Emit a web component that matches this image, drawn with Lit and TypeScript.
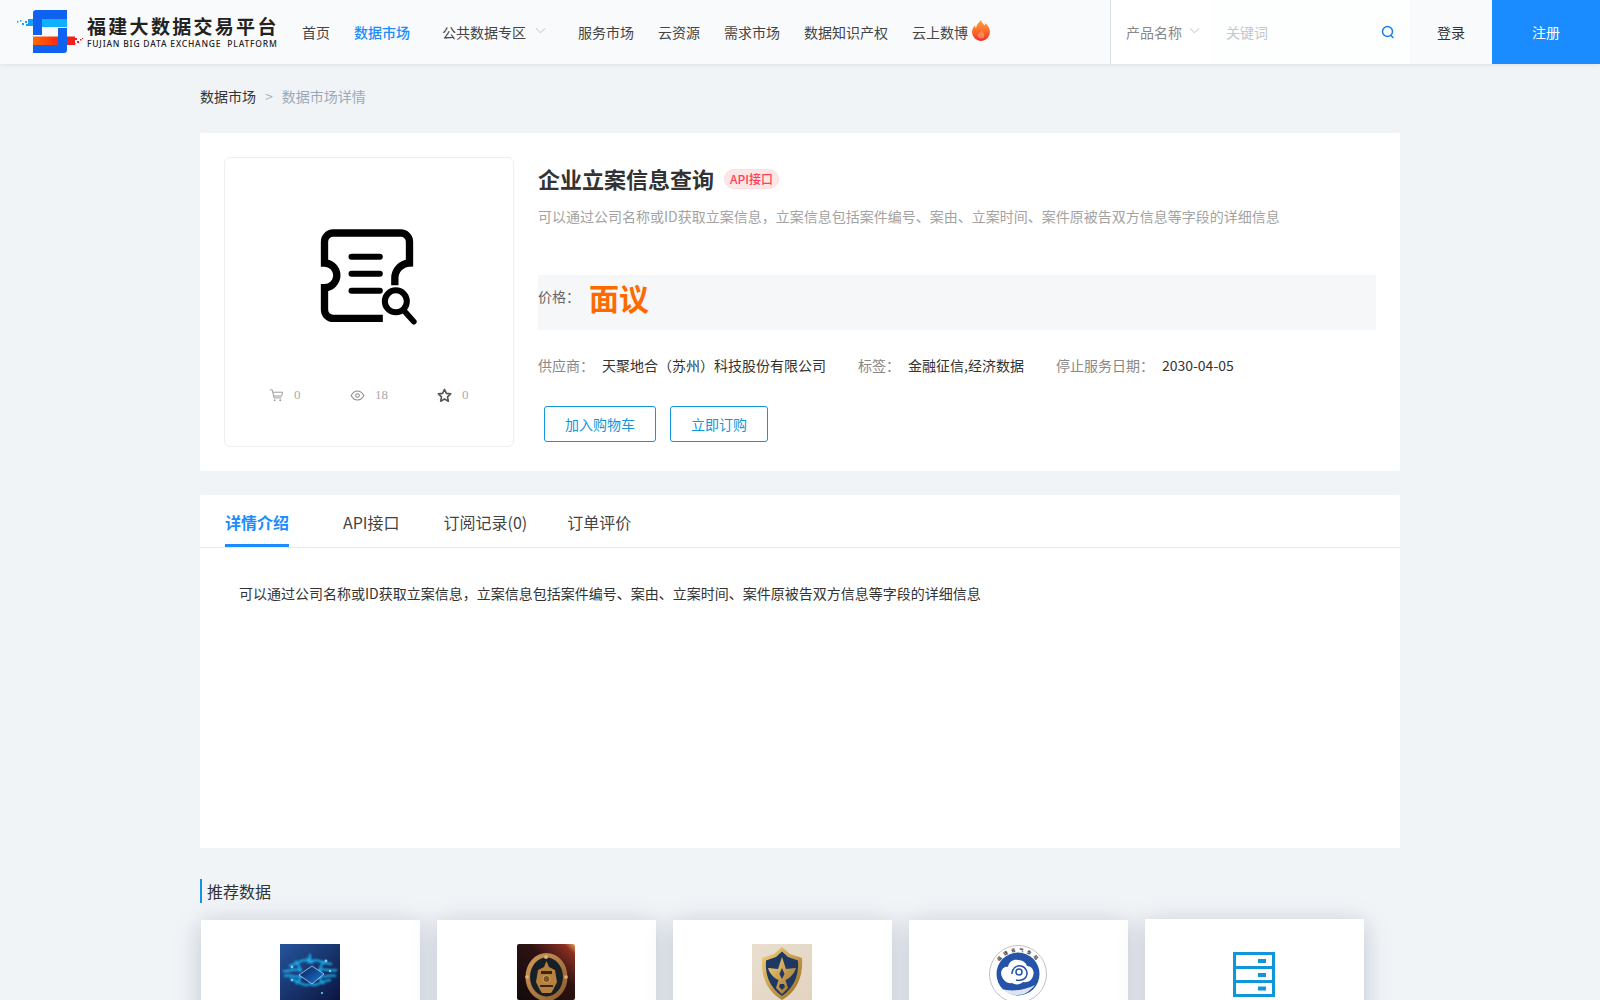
import { LitElement, html, css, svg } from 'lit';
import { customElement } from 'lit/decorators.js';

const navItems = ['服务市场', '云资源', '需求市场', '数据知识产权'];
const chevron = html`<svg class="chev" viewBox="0 0 12 7" width="11" height="7"><path d="M1 1l5 5 5-5" fill="none" stroke="#bbb" stroke-width="1"/></svg>`;

const logo = svg`
  <svg class="logo-mark" viewBox="0 0 84 64" width="84" height="64">
    <defs>
      <linearGradient id="lgO" x1="0" x2="1"><stop offset="0" stop-color="#ff6a00"/><stop offset="1" stop-color="#ff2a10"/></linearGradient>
    </defs>
    <path d="M33 13a3 3 0 0 1 3-3h31v9H42v16h-9z" fill="#0f62f0"/>
    <rect x="42" y="19" width="25" height="8" fill="#0fb0ff"/>
    <rect x="33" y="36.500" width="25" height="8.500" fill="url(#lgO)"/>
    <path d="M58 28h9v22a3 3 0 0 1-3 3H33v-8h25z" fill="#0f62f0"/>
    <rect x="67" y="36.500" width="8" height="8.500" fill="#f0201a"/>
    <g fill="#f0201a">
      <rect x="75" y="38" width="2" height="2"/><rect x="77" y="41" width="2" height="2"/><rect x="74" y="43" width="1.500" height="1.500"/><rect x="80" y="39" width="1.500" height="1.500"/><rect x="82" y="38" width="1" height="1"/>
    </g>
    <g fill="#19a0f5">
      <rect x="28" y="19" width="5" height="7"/><rect x="25" y="21" width="2" height="2"/><rect x="22" y="23" width="2" height="2"/><rect x="20" y="20" width="1.500" height="1.500"/><rect x="17" y="21" width="1.500" height="1.500"/><rect x="26" y="24" width="2" height="2"/>
    </g>
  </svg>`;

const flame = svg`
  <svg class="flame" viewBox="0 0 18 21" width="18" height="21">
    <defs>
      <linearGradient id="fl" x1="0" x2="0" y1="0" y2="1"><stop offset="0" stop-color="#ffa23a"/><stop offset=".55" stop-color="#ff6a2a"/><stop offset="1" stop-color="#f4262a"/></linearGradient>
    </defs>
    <path d="M9 0c1 3 2.500 4 3.500 5.500.5-.7.8-1.500.8-2.300C16 5.500 18 8.500 18 12a9 9 0 0 1-18 0c0-3 1.500-5 3-6.500 0 1 .3 2 1 2.500C4.500 5 6.500 2.500 9 0z" fill="url(#fl)"/>
    <path d="M9.500 10c.5 1.500 3 3 3 5.500a3.600 3.600 0 0 1-7 .5c0-2.500 3-3.500 4-6z" fill="#ffb36b" opacity=".55"/>
  </svg>`;

const productIcon = svg`
  <svg class="product-icon" viewBox="295 230 305 300" width="102" height="100">
    <g fill="none" stroke="#000" stroke-linecap="butt">
      <path stroke-width="22" d="M489 504H340A26 26 0 0 1 314 478V412A37 37 0 0 0 314 338V274A26 26 0 0 1 340 248H543A26 26 0 0 1 569 274V338A46 46 0 0 0 525 385V405"/>
      <path stroke-width="18" stroke-linecap="round" d="M395 319H480M395 370H480M395 421H480"/>
      <circle cx="528" cy="453" r="33" stroke-width="18"/>
      <path stroke-width="17" stroke-linecap="round" d="M556 485L582 514"/>
    </g>
  </svg>`;

const cartIcon = svg`<svg viewBox="0 0 16 16" width="15" height="15"><path d="M1 2h2.500l1.800 8.500h8M4 4.500h10.500l-1 4H5" fill="none" stroke="#999" stroke-width="1"/><circle cx="6" cy="13" r="1" fill="#999"/><circle cx="12" cy="13" r="1" fill="#999"/></svg>`;
const eyeIcon = svg`<svg viewBox="0 0 16 12" width="15" height="11"><path d="M1 6c2-3.500 4.300-5 7-5s5 1.500 7 5c-2 3.500-4.300 5-7 5S3 9.500 1 6z" fill="none" stroke="#888" stroke-width="1.100"/><circle cx="8" cy="6" r="2" fill="none" stroke="#888" stroke-width="1.100"/></svg>`;
const starIcon = svg`<svg viewBox="0 0 16 16" width="15" height="15"><path d="M8 1.500l2 4.200 4.600.6-3.400 3.200.9 4.600L8 11.800l-4.100 2.300.9-4.600L1.400 6.300 6 5.700z" fill="none" stroke="#555" stroke-width="1.700" stroke-linejoin="round"/></svg>`;

const chipPic = svg`
  <svg viewBox="0 0 60 56" width="60" height="56">
    <defs>
      <linearGradient id="c1" x1="0" y1="0" x2="1" y2="1"><stop offset="0" stop-color="#25559c"/><stop offset="1" stop-color="#0b1540"/></linearGradient>
      <linearGradient id="c2" x1="0" y1="0" x2="1" y2="1"><stop offset="0" stop-color="#0a1a50"/><stop offset="1" stop-color="#1a7fe0"/></linearGradient>
      <filter id="bl" x="-20%" y="-20%" width="140%" height="140%"><feGaussianBlur stdDeviation=".9"/></filter>
    </defs>
    <rect width="60" height="56" fill="url(#c1)"/>
    <g fill="none" stroke="#1bb4ee" stroke-width="2" filter="url(#bl)">
      <path d="M30 19C24 12 18 20 9 22M30 19C36 12 42 20 52 20M22 26C14 24 10 28 3 27M38 26C46 24 50 28 57 26"/>
      <path d="M30 40C24 44 18 36 10 35M30 40C36 44 42 36 51 36M22 32C14 34 10 30 4 32M38 32C46 34 50 30 56 32"/>
      <path d="M15 17C20 22 20 24 20 28M45 17C40 22 40 24 40 28M16 40C20 36 21 34 21 31M44 40C40 36 39 34 39 31M30 10V18M27 14L33 19"/>
    </g>
    <path d="M32 22L44 30 32 40 19 31z" fill="url(#c2)" stroke="#cfeeff" stroke-width=".7"/>
    <g fill="#6fd2ff"><circle cx="46" cy="17" r="1.400"/><circle cx="12" cy="23" r="1.400"/><circle cx="42" cy="49" r="1.100"/><circle cx="50" cy="27" r="1.200"/><circle cx="12" cy="36" r="1.200"/></g>
  </svg>`;

const medalPic = svg`
  <svg viewBox="0 0 58 56" width="58" height="56">
    <defs>
      <linearGradient id="m1" x1="0" y1="1" x2="1" y2="0"><stop offset="0" stop-color="#120a0c"/><stop offset=".6" stop-color="#2e1212"/><stop offset=".9" stop-color="#8a2f22"/><stop offset="1" stop-color="#e3a55a"/></linearGradient>
      <linearGradient id="m2" x1="0" y1="0" x2="1" y2="1"><stop offset="0" stop-color="#d49b5a"/><stop offset="1" stop-color="#8a5a2c"/></linearGradient>
    </defs>
    <rect width="58" height="56" rx="2" fill="url(#m1)"/>
    <ellipse cx="29.500" cy="33" rx="21" ry="24" fill="url(#m2)"/>
    <ellipse cx="29.500" cy="33" rx="16.500" ry="19.500" fill="#172027"/>
    <path d="M29.500 17l2.500 6 6 3 2 12-4 8-2 3h-9l-2-3-4-8 2-12 6-3z" fill="#b6813f"/>
    <path d="M24 27h11v3H24zM23 41h13v2H23z" fill="#3a2712"/>
    <circle cx="29.500" cy="35" r="3.500" fill="#7a5324" stroke="#e0b16f" stroke-width=".8"/>
    <g fill="#e0b16f"><circle cx="29" cy="13" r="2"/><circle cx="49" cy="33" r="1.800"/><circle cx="10" cy="33" r="1.800"/></g>
  </svg>`;

const shieldPic = svg`
  <svg viewBox="0 0 60 56" width="60" height="56">
    <defs>
      <linearGradient id="s1" x1="0" y1="0" x2="1" y2="1"><stop offset="0" stop-color="#e9dfd0"/><stop offset="1" stop-color="#e2d3bf"/></linearGradient>
      <linearGradient id="s2" x1="0" y1="0" x2="1" y2="1"><stop offset="0" stop-color="#f2d37f"/><stop offset="1" stop-color="#99691f"/></linearGradient>
    </defs>
    <rect width="60" height="56" fill="url(#s1)"/>
    <path d="M30 3L38 10 50 14C51 30 47 46 30 56 13 46 9 30 10 14L22 10z" fill="url(#s2)"/>
    <path d="M30 7.500L36 13 46 16.500C47 30 43 43 30 52 17 43 13 30 14 16.500L24 13z" fill="#1f3763"/>
    <path d="M30 13L34 25 44 24C42 30 38 34 33.500 36L36 44 30 50 24 44 26.500 36C22 34 18 30 16 24L26 25z" fill="url(#s2)"/>
    <path d="M30 24l2.500 6-2.500 5-2.500-5zM28 40h4l1 3-3 3-3-3z" fill="#1f3763"/>
  </svg>`;

const sealPic = svg`
  <svg viewBox="0 0 58 58" width="58" height="58">
    <defs><path id="sa" d="M6.500 29a22.500 22.500 0 0 1 45 0"/></defs>
    <circle cx="29" cy="29" r="28.500" fill="#fff" stroke="#a8a8a8" stroke-width=".7"/>
    <text font-size="4.600" fill="#444" font-family="'Noto Sans CJK SC', sans-serif" font-weight="700" letter-spacing="3"><textPath href="#sa" startOffset="13">福建省气象局</textPath></text>
    <circle cx="29" cy="29" r="21.500" fill="#2553a8"/>
    <path d="M13 32c-3-6 2-11 6-10 1-6 6-8 10-7 5 0 8 3 9 6 5 0 8 5 6 10-1 4-5 7-10 6-3 3-8 3-11 1-4 1-8-2-10-6z" fill="#fff"/>
    <g fill="none" stroke="#2553a8" stroke-width="1.500">
      <circle cx="30" cy="27" r="3"/>
      <path d="M23 29a7.500 7.500 0 1 1 14 3c-2 3-7 4-10 3"/>
    </g>
    <path d="M12 44c12 3 24 1 34-4-6 7-11 10-17 10-7 0-12-2-17-6z" fill="#fff" opacity=".85"/>
  </svg>`;

const serverPic = svg`
  <svg viewBox="0 0 42 45" width="42" height="45">
    <g fill="none" stroke="#1296db" stroke-width="3">
      <rect x="1.500" y="1.500" width="39" height="42"/>
      <path d="M1.500 15.500H40.500M1.500 29.500H40.500"/>
    </g>
    <rect x="25" y="7" width="8" height="4" fill="#1296db"/>
    <rect x="25" y="21" width="8" height="4" fill="#1296db"/>
    <rect x="25" y="34.500" width="8" height="4" fill="#1296db"/>
  </svg>`;

const recommended = [
  { pic: chipPic, cls: '' },
  { pic: medalPic, cls: '' },
  { pic: shieldPic, cls: '' },
  { pic: sealPic, cls: 'seal' },
  { pic: serverPic, cls: 'server' },
];

@customElement('app-root')
export class AppRoot extends LitElement {
  static styles = css`
    :host {
      display: block;
      height: 1000px;
      overflow: hidden;
      background: #f1f4f7;
      color: #333;
      font-family: 'Noto Sans CJK SC', 'Noto Sans', sans-serif;
      font-size: 14px;
    }

    svg {
      display: block;
    }

    .topbar {
      display: flex;
      align-items: stretch;
      height: 64px;
      background: #f9fafc;
      box-shadow: 0 1px 5px rgba(40, 60, 90, 0.1);
    }

    .logo {
      display: flex;
      width: 282px;
      flex: none;
    }

    .logo-mark {
      flex: none;
    }

    .logo-text {
      margin-left: 3px;
      padding-top: 14px;
      white-space: nowrap;
      color: #222;
    }

    .logo-cn {
      font-size: 19px;
      line-height: 24px;
      font-weight: 700;
      letter-spacing: 2.300px;
    }

    .logo-en {
      font-family: 'Noto Sans', sans-serif;
      font-size: 8.500px;
      line-height: 12px;
      font-weight: 500;
      letter-spacing: 0.800px;
      white-space: pre;
    }

    .nav {
      display: flex;
      align-items: center;
      gap: 24px;
      margin-left: 20px;
      flex: 1;
      white-space: nowrap;
      color: #444;
    }

    .nav a.active {
      color: #1a8cff;
      font-weight: 500;
      margin-right: 8px;
    }

    .nav .drop {
      display: flex;
      align-items: center;
      gap: 9px;
      margin-right: 8px;
    }

    .nav .drop .chev {
      margin-top: -4px;
    }

    .nav .hot {
      display: flex;
      align-items: center;
      gap: 4px;
    }

    .flame {
      margin-top: -4px;
    }

    .search {
      display: flex;
      align-items: center;
      width: 300px;
      flex: none;
      background: #fdfefe;
      border-left: 1px solid #dcdfe6;
      box-sizing: border-box;
    }

    .search .type {
      display: flex;
      align-items: center;
      gap: 7px;
      width: 100px;
      padding-left: 15px;
      box-sizing: border-box;
      height: 100%;
      background: #fff;
      color: #888;
    }

    .search .type .chev {
      margin-top: -3px;
    }

    .search .kw {
      flex: 1;
      padding-left: 15px;
      color: #c4c7cc;
    }

    .search .go {
      margin-right: 15px;
    }

    .login {
      width: 82px;
      flex: none;
      display: flex;
      align-items: center;
      justify-content: center;
      padding-bottom: 1px;
      box-sizing: border-box;
      color: #333;
    }

    .register {
      width: 108px;
      flex: none;
      display: flex;
      align-items: center;
      justify-content: center;
      background: #1a8cff;
      color: #fff;
    }

    .page {
      width: 1200px;
      margin: 0 auto;
    }

    .crumbs {
      display: flex;
      align-items: center;
      height: 69px;
      padding-bottom: 6px;
      box-sizing: border-box;
      color: #333;
    }

    .crumbs .sep {
      margin: 0 9px;
      color: #a6b1bd;
    }

    .crumbs .cur {
      color: #9aa9b8;
    }

    .card {
      background: #fff;
      border-radius: 2px;
    }

    .product {
      display: flex;
      gap: 24px;
      padding: 24px;
      height: 338px;
      box-sizing: border-box;
    }

    .cover {
      width: 290px;
      height: 290px;
      box-sizing: border-box;
      flex: none;
      border: 1px solid #eceef1;
      border-radius: 6px;
      display: flex;
      flex-direction: column;
      align-items: center;
    }

    .product-icon {
      margin-top: 69px;
    }

    .stats {
      display: flex;
      margin-top: 60px;
      width: 100%;
      padding-left: 44px;
      box-sizing: border-box;
      font-family: 'Liberation Serif', serif;
      font-size: 13px;
      color: #aaa;
    }

    .stat {
      display: flex;
      align-items: center;
      gap: 10px;
    }

    .stat:nth-child(1) {
      width: 81px;
    }

    .stat:nth-child(2) {
      width: 87px;
    }

    .info {
      flex: 1;
      min-width: 0;
    }

    .title-row {
      display: flex;
      align-items: center;
      gap: 10px;
      height: 41px;
    }

    h1 {
      margin: 0;
      font-size: 22px;
      font-weight: 700;
      color: #333;
    }

    .tag {
      height: 20px;
      line-height: 18px;
      margin-top: 2px;
      padding: 0 5px;
      box-sizing: border-box;
      border: 1px solid #fcdde0;
      border-radius: 10px;
      background: #fde6e8;
      color: #ff4054;
      font-size: 12px;
      font-weight: 500;
    }

    .desc {
      margin-top: 5px;
      line-height: 26px;
      color: #a3a3a3;
    }

    .price {
      display: flex;
      align-items: center;
      height: 55px;
      margin-top: 46px;
      background: #f6f7f9;
    }

    .price .label {
      width: 51px;
      margin-bottom: 14px;
      color: #666;
    }

    .price .value {
      font-size: 30px;
      font-weight: 700;
      color: #ff6a00;
      line-height: 40px;
      margin-bottom: 12px;
    }

    .meta {
      display: flex;
      align-items: center;
      height: 24px;
      margin-top: 23px;
      white-space: nowrap;
      color: #333;
    }

    .meta .k {
      color: #888;
      margin-right: 8px;
    }

    .meta .v {
      margin-right: 32px;
    }

    .actions {
      display: flex;
      gap: 14px;
      margin: 29px 0 0 6px;
    }

    .btn {
      height: 36px;
      box-sizing: border-box;
      padding: 0 20px;
      display: flex;
      align-items: center;
      border: 1px solid #1296db;
      border-radius: 3px;
      color: #1296db;
    }

    .detail {
      margin-top: 24px;
      height: 353px;
    }

    .tabs {
      display: flex;
      height: 53px;
      box-sizing: border-box;
      border-bottom: 1px solid #e6e8eb;
      padding-left: 25px;
      font-size: 16px;
      color: #444;
    }

    .tab {
      height: 52px;
      line-height: 55px;
      box-sizing: border-box;
      margin-right: 40px;
    }

    .tab.api {
      margin-right: 44px;
    }

    .tab.active {
      color: #1a8cff;
      font-weight: 700;
      border-bottom: 3px solid #1a8cff;
      margin-right: 54px;
    }

    .detail-body {
      padding: 34px 39px;
      line-height: 22px;
      color: #333;
    }

    .rec-title {
      display: flex;
      align-items: center;
      height: 24px;
      margin-top: 31px;
      padding-left: 5px;
      border-left: 2px solid #1296db;
      font-size: 16px;
      color: #333;
    }

    .rec-list {
      display: flex;
      align-items: flex-start;
      gap: 17px;
      margin: 17px 0 0 1px;
    }

    .rec {
      width: 219px;
      height: 240px;
      flex: none;
      display: flex;
      justify-content: center;
      padding: 24px 2px 0 0;
      box-sizing: border-box;
      background: #fff;
      box-shadow: 0 4px 24px rgba(70, 85, 115, 0.28);
    }

    .rec.seal {
      padding-top: 25px;
    }

    .rec.server {
      height: 241px;
      margin-top: -1px;
      padding-top: 33px;
    }
  `;

  render() {
    return html`
      <header class="topbar">
        <div class="logo">
          ${logo}
          <div class="logo-text">
            <div class="logo-cn">福建大数据交易平台</div>
            <div class="logo-en">FUJIAN BIG DATA EXCHANGE  PLATFORM</div>
          </div>
        </div>
        <nav class="nav">
          <a>首页</a>
          <a class="active">数据市场</a>
          <a class="drop">公共数据专区 ${chevron}</a>
          ${navItems.map((item) => html`<a>${item}</a>`)}
          <a class="hot">云上数博 ${flame}</a>
        </nav>
        <div class="search">
          <div class="type">产品名称 ${chevron}</div>
          <div class="kw">关键词</div>
          <svg class="go" viewBox="0 0 14 14" width="14" height="14">
            <circle cx="6.500" cy="6.500" r="5" fill="none" stroke="#1a7fe8" stroke-width="1.500"/>
            <path d="M10 10.500l2.500 2.500" stroke="#1a7fe8" stroke-width="1.500"/>
          </svg>
        </div>
        <div class="login">登录</div>
        <div class="register">注册</div>
      </header>

      <main class="page">
        <div class="crumbs">
          <span>数据市场</span><span class="sep">&gt;</span><span class="cur">数据市场详情</span>
        </div>

        <section class="card product">
          <div class="cover">
            ${productIcon}
            <div class="stats">
              <div class="stat">${cartIcon}<span>0</span></div>
              <div class="stat">${eyeIcon}<span>18</span></div>
              <div class="stat">${starIcon}<span>0</span></div>
            </div>
          </div>
          <div class="info">
            <div class="title-row">
              <h1>企业立案信息查询</h1>
              <span class="tag">API接口</span>
            </div>
            <div class="desc">可以通过公司名称或ID获取立案信息，立案信息包括案件编号、案由、立案时间、案件原被告双方信息等字段的详细信息</div>
            <div class="price">
              <span class="label">价格：</span>
              <span class="value">面议</span>
            </div>
            <div class="meta">
              <span class="k">供应商：</span><span class="v">天聚地合（苏州）科技股份有限公司</span>
              <span class="k">标签：</span><span class="v">金融征信,经济数据</span>
              <span class="k">停止服务日期：</span><span>2030-04-05</span>
            </div>
            <div class="actions">
              <div class="btn">加入购物车</div>
              <div class="btn">立即订购</div>
            </div>
          </div>
        </section>

        <section class="card detail">
          <div class="tabs">
            <div class="tab active">详情介绍</div>
            <div class="tab api">API接口</div>
            <div class="tab">订阅记录(0)</div>
            <div class="tab">订单评价</div>
          </div>
          <div class="detail-body">可以通过公司名称或ID获取立案信息，立案信息包括案件编号、案由、立案时间、案件原被告双方信息等字段的详细信息</div>
        </section>

        <div class="rec-title">推荐数据</div>
        <div class="rec-list">
          ${recommended.map((r) => html`<div class="rec ${r.cls}"><div>${r.pic}</div></div>`)}
        </div>
      </main>
    `;
  }
}

declare global {
  interface HTMLElementTagNameMap {
    'app-root': AppRoot;
  }
}
